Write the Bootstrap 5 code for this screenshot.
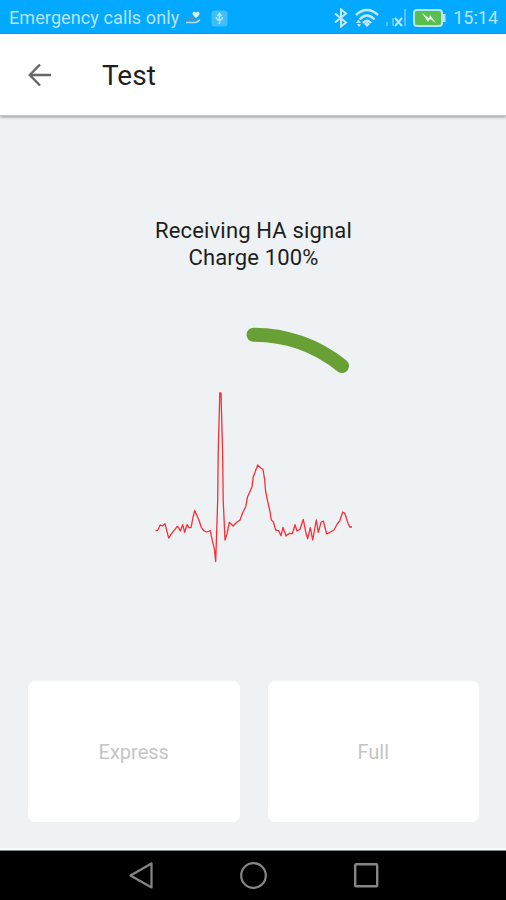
<!DOCTYPE html>
<html lang="en">
<head>
<meta charset="utf-8">
<meta name="viewport" content="width=device-width, initial-scale=1">
<title>Test</title>
<link href="https://cdn.jsdelivr.net/npm/bootstrap@5.3.0/dist/css/bootstrap.min.css" rel="stylesheet">
<style>
body{font-family:Roboto,sans-serif;background:#eef2f5;overflow:hidden}
.status-strip{height:34px;background:#03a9ff;color:#b5e4fc;font-size:18px;line-height:34px;padding:2px 8px 0 9px}
.carrier{letter-spacing:.1px;margin-right:6px}
.wifi,.clock{margin-left:7px}
.battery{margin-left:7px}
.app-header{height:82px;padding-left:28px;border-bottom:1px solid #c4c7c9;box-shadow:0 1px 3px rgba(0,0,0,.4);z-index:1}
.app-title{font-size:28px;line-height:34px;color:#1f1f1f;font-weight:400;margin-left:50px;padding-top:2px}
.status-text{padding:101px 0 0 1px;font-size:22px;line-height:27px;letter-spacing:.16px;color:#1c1e20}
.signal-plot{margin-top:49px}
.choices{padding:0 27px 26px 28px;gap:28px;border-bottom:2px solid #f8fafb}
.choice,.choice:disabled{height:141px;border:0;border-radius:7px;background:#fff;color:#c5c5c5;opacity:1;font-size:20px;line-height:24px}
.nav-keys{height:50px;background:#000;border-top:1px solid #85888b;gap:86px}
</style>
<script src="https://cdn.jsdelivr.net/npm/bootstrap@5.3.0/dist/js/bootstrap.bundle.min.js"></script>
</head>
<body>
<div class="vh-100 d-flex flex-column">
  <div class="status-strip d-flex align-items-center flex-shrink-0">
    <span class="carrier">Emergency calls only</span>
    <svg width="18" height="18" viewBox="0 0 18 18"><path d="M7.500 4.500c0-2.200 2.700-2.300 3.500-.8.800-1.500 3.500-1.400 3.500.8 0 2-2 3-3.500 4.500-1.500-1.500-3.500-2.500-3.500-4.500z" fill="#d9f1fd"/><path d="M1 11.500 5 9l4 .5 1 1.500 5-1" fill="none" stroke="#5f8faf" stroke-width="1.500"/><path d="M1 13.500h10l4-2.500" fill="none" stroke="#b5def5" stroke-width="1.500"/></svg>
    <svg class="ms-2" width="17" height="17" viewBox="0 0 17 17"><rect x=".5" y=".5" width="16" height="16" rx="3" fill="#40bfff"/><path d="M8.500 14V4M6.500 6l2-2.500 2 2.500M5.500 7v1.500l3 2.500 3-2.500V7" fill="none" stroke="#b5e4fc" stroke-width="1.500"/></svg>
    <div class="ms-auto d-flex align-items-center">
      <svg width="14" height="20" viewBox="0 0 14 20"><path d="m1 5.500 11 9-5 4V1.500l5 4-11 9" fill="none" stroke="#c2e9fd" stroke-width="2"/></svg>
      <svg class="wifi" width="24" height="20" viewBox="0 0 24 20"><path d="M1 7Q12-3 23 7M4.500 11.500Q12 3.500 19.500 11.500M8 15Q12 10.500 16 15" fill="none" stroke="#c2e9fd" stroke-width="2.500"/><path d="m12 14 3 2-3 3-3-3zM1 15l2.500-3.500L6 15zm1 1h4l-2 3z" fill="#c2e9fd"/></svg>
      <svg style="margin-left:6px" width="21" height="20" viewBox="0 0 21 20"><path d="M2 14v4M8 10v8M20 1v17" stroke="#54c3fc" stroke-width="2"/><path d="m10 10 7 8m0-8-7 8" stroke="#b5e4fc" stroke-width="2"/></svg>
      <svg class="battery" width="33" height="18" viewBox="0 0 33 18"><rect x="1" y="1" width="28" height="16" rx="3" fill="#58bf4f" stroke="#b5e4fc" stroke-width="2"/><path d="M31 5v8" stroke="#b5e4fc" stroke-width="3"/><path d="m9 4 7 5 1-3 6 8-6-4-2 3z" fill="#e3f6ea"/></svg>
      <span class="clock">15:14</span>
    </div>
  </div>
  <header class="app-header bg-white d-flex align-items-center flex-shrink-0 position-relative">
    <svg width="24" height="24" viewBox="0 0 24 24"><path d="M23 12H2M12 1.500 1.800 12 12 22.500" fill="none" stroke="#666" stroke-width="2.400"/></svg>
    <h1 class="app-title mb-0">Test</h1>
  </header>
  <main class="flex-grow-1 d-flex flex-column">
    <p class="status-text text-center mb-0">Receiving HA signal<br>Charge 100%</p>
    <svg class="signal-plot d-block mx-auto flex-shrink-0" width="300" height="260" viewBox="103 320 300 260" fill="none">
      <path d="M253.500 334.700A140 140 0 0 1 342 366" stroke="#68a036" stroke-width="14" stroke-linecap="round"/>
      <polyline stroke="#f92e34" stroke-width="1.300" stroke-linejoin="round" points="155.500,530.700 157.700,530.300 160.300,525 162.300,526 165,523.700 167,531.700 168.700,538 171,534.300 173,531.700 175,529.300 177.300,526.300 178.700,527.700 180.300,531 182.700,524.700 184.700,532.300 187,524.700 189,527.700 191,527.700 193,517.300 194.700,510.500 196.700,515 199,520.300 201.300,527.300 203.700,530.700 206.700,532 210.300,530.700 212.300,540.700 214.300,548.300 215.700,561.500 217.700,500 218.200,453 219.800,393 221,393 222.600,452 223.200,500 225,540 227,534 229.300,522.300 233,526 236.700,522.300 240,520 242.700,512.700 245.700,506.700 247.600,496.700 250.300,490.700 252,486.700 253.300,476.700 257.700,465 260.700,468 263,469.300 264.700,480 265.500,490.700 267.700,501.700 270,511.700 271.300,520 273.300,521.700 275.700,530 278.700,530.700 281,535.700 283,527.300 286,536 289.300,533.300 292.300,533.700 295,524.700 297,531 300,529.300 303.300,519.300 306,533.300 307.700,538.700 310.300,527.700 312.700,540 316.300,520 318.300,532.300 321,522.300 323.300,521 326.700,534 330,532.300 334,530 337.300,523.700 339.700,521 342.700,512 344.700,513.300 347.700,522.300 349.700,527 352,527"/>
    </svg>
    <div class="choices d-flex mt-auto">
      <button class="choice btn flex-fill w-50" type="button" disabled>Express</button>
      <button class="choice btn flex-fill w-50" type="button" disabled>Full</button>
    </div>
  </main>
  <nav class="nav-keys d-flex align-items-center justify-content-center flex-shrink-0">
    <svg width="27" height="28" viewBox="0 0 27 28" fill="none" stroke="#858585" stroke-width="2.200" stroke-linejoin="round"><path d="M24.500 1.500v24L3.500 13.500z"/></svg>
    <svg width="28" height="28" viewBox="0 0 28 28" fill="none" stroke="#858585" stroke-width="2.200"><circle cx="13.500" cy="13.500" r="12.300"/></svg>
    <svg width="26" height="26" viewBox="0 0 26 26" fill="none" stroke="#858585" stroke-width="2.400"><rect x="1.200" y="1.200" width="22" height="22" rx="1"/></svg>
  </nav>
</div>
</body>
</html>
